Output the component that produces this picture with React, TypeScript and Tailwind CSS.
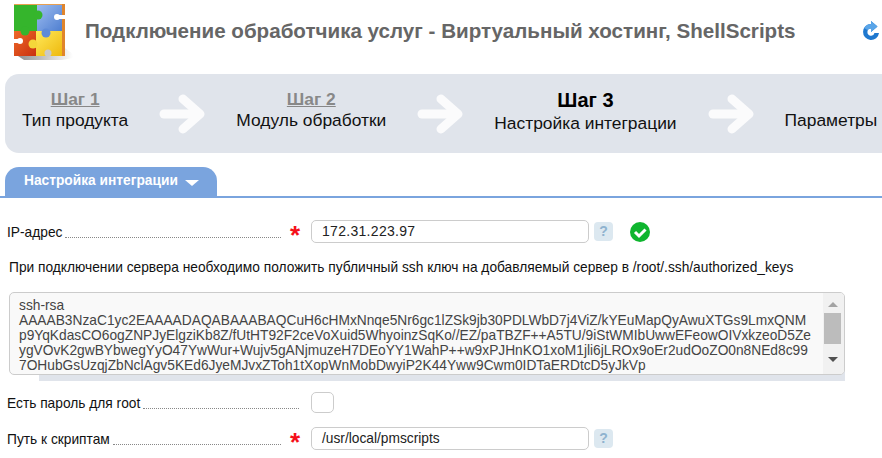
const Arrow = () => (
  <svg className="w-[46px] h-[40px] shrink-0" viewBox="0 0 46 40" fill="none" stroke="#fbfbfc" strokeWidth="9" strokeLinecap="round" strokeLinejoin="round">
    <path d="M5 20H40" />
    <path d="M24 5L41 20L24 35" />
  </svg>
);

const Help = () => (
  <span className="block w-[19px] h-[19px] rounded-[4px] bg-[#dce8f0] text-[#8fb3cf] font-bold text-[14px] leading-[19px] text-center shrink-0">?</span>
);

const Star = () => (
  <span className="w-[30px] shrink-0 text-[#f5101a] font-bold text-[26px] leading-[20px] h-[14px] text-center pr-[2px] pl-0">*</span>
);

const Label = ({ text, width }: { text: string; width: string }) => (
  <div className={`flex items-end shrink-0 text-[13.75px] leading-[15px] text-[#111] pt-[2px] ${width}`}>
    <span>{text}</span>
    <span className="flex-1 ml-[3px] mb-[2px] border-b border-dotted border-[#888]" />
  </div>
);

const Puzzle = () => (
  <svg className="w-[60px] h-[58px] shrink-0" viewBox="0 0 60 58">
    <defs>
      <linearGradient id="shadow" x1="0" y1="0" x2="1" y2="0">
        <stop offset="0" stopColor="#8f8f8f" />
        <stop offset="1" stopColor="#ffffff" />
      </linearGradient>
      <linearGradient id="blue" x1="0" y1="0" x2="1" y2="1">
        <stop offset="0" stopColor="#9dbcf0" />
        <stop offset="1" stopColor="#4f7fd0" />
      </linearGradient>
      <linearGradient id="yellow" x1="0" y1="0" x2="1" y2="1">
        <stop offset="0" stopColor="#ffe95a" />
        <stop offset="1" stopColor="#eeb90e" />
      </linearGradient>
      <linearGradient id="red" x1="0" y1="0" x2="1" y2="1">
        <stop offset="0" stopColor="#ee6a2a" />
        <stop offset="1" stopColor="#c9300e" />
      </linearGradient>
    </defs>
    <path d="M4 54H50L51 46L59 52V56L48 58H10Z" fill="url(#shadow)" />
    <rect x="0" y="2" width="51" height="1" fill="#e8a050" />
    <rect x="48" y="2" width="3" height="52" fill="#e0852c" />
    <rect x="0" y="3" width="23" height="26" fill="#35b52c" />
    <rect x="23" y="3" width="25" height="26" fill="url(#blue)" />
    <circle cx="24" cy="13" r="4.5" fill="#35b52c" />
    <rect x="43" y="13" width="8" height="4" fill="#fff" />
    <circle cx="43" cy="15" r="3" fill="#fff" />
    <rect x="0" y="29" width="22" height="25" fill="url(#red)" />
    <rect x="22" y="29" width="26" height="25" fill="url(#yellow)" />
    <circle cx="32" cy="31" r="4.5" fill="#5f8bd8" />
    <circle cx="11" cy="29" r="4.5" fill="#35b52c" />
    <rect x="0" y="37" width="6" height="4" fill="#fff" />
    <circle cx="6" cy="39" r="3" fill="#fff" />
    <circle cx="19" cy="42" r="4.5" fill="#f4d73a" />
    <circle cx="34" cy="51" r="3.5" fill="#c9c9c9" />
    <rect x="32" y="51" width="4" height="3" fill="#c9c9c9" />
  </svg>
);

const Refresh = () => (
  <svg className="w-[18px] h-[20px] shrink-0" viewBox="0 0 18 20">
    <path d="M9 3A8 8 0 1 0 17 12H12.5A3.6 3.6 0 1 1 9 7.5V11L15.5 5.5L9 0Z" fill="#1f78cf" />
    <path d="M9 3A8 8 0 0 0 2 7L5.5 9A4 4 0 0 1 9 7.5V11L15.5 5.5L9 0Z" fill="#5aa5e8" />
  </svg>
);

const keyLines = [
  "ssh-rsa",
  "AAAAB3NzaC1yc2EAAAADAQABAAABAQCuH6cHMxNnqe5Nr6gc1lZSk9jb30PDLWbD7j4ViZ/kYEuMapQyAwuXTGs9LmxQNM",
  "p9YqKdasCO6ogZNPJyElgziKb8Z/fUtHT92F2ceVoXuid5WhyoinzSqKo//EZ/paTBZF++A5TU/9iStWMIbUwwEFeowOIVxkzeoD5Ze",
  "ygVOvK2gwBYbwegYyO47YwWur+Wujv5gANjmuzeH7DEoYY1WahP++w9xPJHnKO1xoM1jli6jLROx9oEr2udOoZO0n8NEd8c99",
  "7OHubGsUzqjZbNclAgv5KEd6JyeMJvxZToh1tXopWnMobDwyiP2K44Yww9Cwm0IDTaERDtcD5yJkVp",
];

export default function App() {
  return (
    <div className="w-[882px] h-[458px] overflow-hidden bg-white font-['Liberation_Sans',Arial,sans-serif]">
      {/* Header */}
      <div className="flex items-center h-[74px] pl-[14px] pb-[12px] pr-[2px]">
        <Puzzle />
        <h1 className="ml-[11px] flex-1 text-[20.6px] font-bold text-[#666] whitespace-nowrap">
          Подключение обработчика услуг - Виртуальный хостинг, ShellScripts
        </h1>
        <Refresh />
      </div>

      {/* Steps */}
      <div className="ml-[5px] h-[79px] w-[900px] bg-[#e0e4eb] rounded-l-[14px] flex items-center pl-[17px] gap-[31px] whitespace-nowrap text-[#111]">
        <div className="text-center text-[17.4px] leading-[21px] pb-[7px]">
          <div className="font-bold text-[#888] underline">Шаг 1</div>
          <div>Тип продукта</div>
        </div>
        <Arrow />
        <div className="text-center text-[17.4px] leading-[21px] pb-[7px]">
          <div className="font-bold text-[#888] underline">Шаг 2</div>
          <div>Модуль обработки</div>
        </div>
        <Arrow />
        <div className="text-center text-[17.4px] leading-[23px] pb-[3px]">
          <div className="font-bold text-black text-[20px]">Шаг 3</div>
          <div>Настройка интеграции</div>
        </div>
        <Arrow />
        <div className="text-[17.4px] leading-[21px] pt-[14px]">Параметры</div>
      </div>

      {/* Tab */}
      <div className="mt-[14px] h-[31px] border-b-2 border-[#7aa4de]">
        <div className="ml-[5px] w-[212px] h-[31px] bg-[#7aa4de] rounded-t-[14px] flex items-center pl-[19px] pb-[3px] text-white font-bold text-[13.75px]">
          Настройка интеграции
          <span className="ml-[7px] mt-[3px] border-x-[7px] border-x-transparent border-t-[6px] border-t-white" />
        </div>
      </div>

      {/* IP */}
      <div className="flex items-center mt-[22px] pl-[7px] h-[23px]">
        <Label text="IP-адрес" width="w-[274px]" />
        <Star />
        <div className="w-[278px] h-[23px] border border-[#ccc] rounded-[5px] pl-[10px] text-[14px] leading-[21px] text-[#222] tracking-[0.3px]">172.31.223.97</div>
        <span className="ml-[5px]"><Help /></span>
        <svg className="ml-[17px] w-[20px] h-[20px]" viewBox="0 0 20 20">
          <circle cx="10" cy="10" r="10" fill="#0fb52f" />
          <path d="M5 10L9 14L15.5 7.5" fill="none" stroke="#fff" strokeWidth="3" />
        </svg>
      </div>

      <p className="mt-[17px] ml-[9px] text-[13.75px] leading-[15px] text-[#111] whitespace-nowrap">
        При подключении сервера необходимо положить публичный ssh ключ на добавляемый сервер в /root/.ssh/authorized_keys
      </p>

      {/* Key */}
      <div className="relative mt-[17px] ml-[9px] w-[836px] h-[89px]">
        <div className="absolute left-[30px] right-0 bottom-0 h-[10px] bg-[#e0e4eb]" />
        <div className="relative h-[83px] bg-[#f9f9f9] border border-[#ccc] rounded-[5px] flex overflow-hidden">
          <div className="flex-1 pl-[9px] pt-[5px] text-[13.75px] leading-[15px] text-[#444] whitespace-pre overflow-hidden">
            {keyLines.map((line) => (
              <div key={line}>{line}</div>
            ))}
          </div>
          <div className="w-[21px] bg-[#f1f1f1] flex flex-col items-center pt-[9px] pr-[2px] shrink-0">
            <span className="border-x-[5px] border-x-transparent border-b-[5px] border-b-[#a3a3a3]" />
            <span className="mt-[6px] w-[17px] h-[31px] bg-[#bcbcbc]" />
            <span className="mt-[13px] border-x-[5px] border-x-transparent border-t-[5px] border-t-[#505050]" />
          </div>
        </div>
      </div>

      {/* Root password */}
      <div className="flex items-center mt-[11px] pl-[7px] h-[21px]">
        <Label text="Есть пароль для root" width="w-[292px]" />
        <span className="ml-[12px] w-[23px] h-[21px] border border-[#ccc] rounded-[5px]" />
      </div>

      {/* Scripts path */}
      <div className="flex items-center mt-[14px] pl-[7px] h-[23px]">
        <Label text="Путь к скриптам" width="w-[274px]" />
        <Star />
        <div className="w-[278px] h-[23px] border border-[#ccc] rounded-[5px] pl-[10px] text-[13.75px] leading-[21px] text-[#222]">/usr/local/pmscripts</div>
        <span className="ml-[5px]"><Help /></span>
      </div>
    </div>
  );
}
